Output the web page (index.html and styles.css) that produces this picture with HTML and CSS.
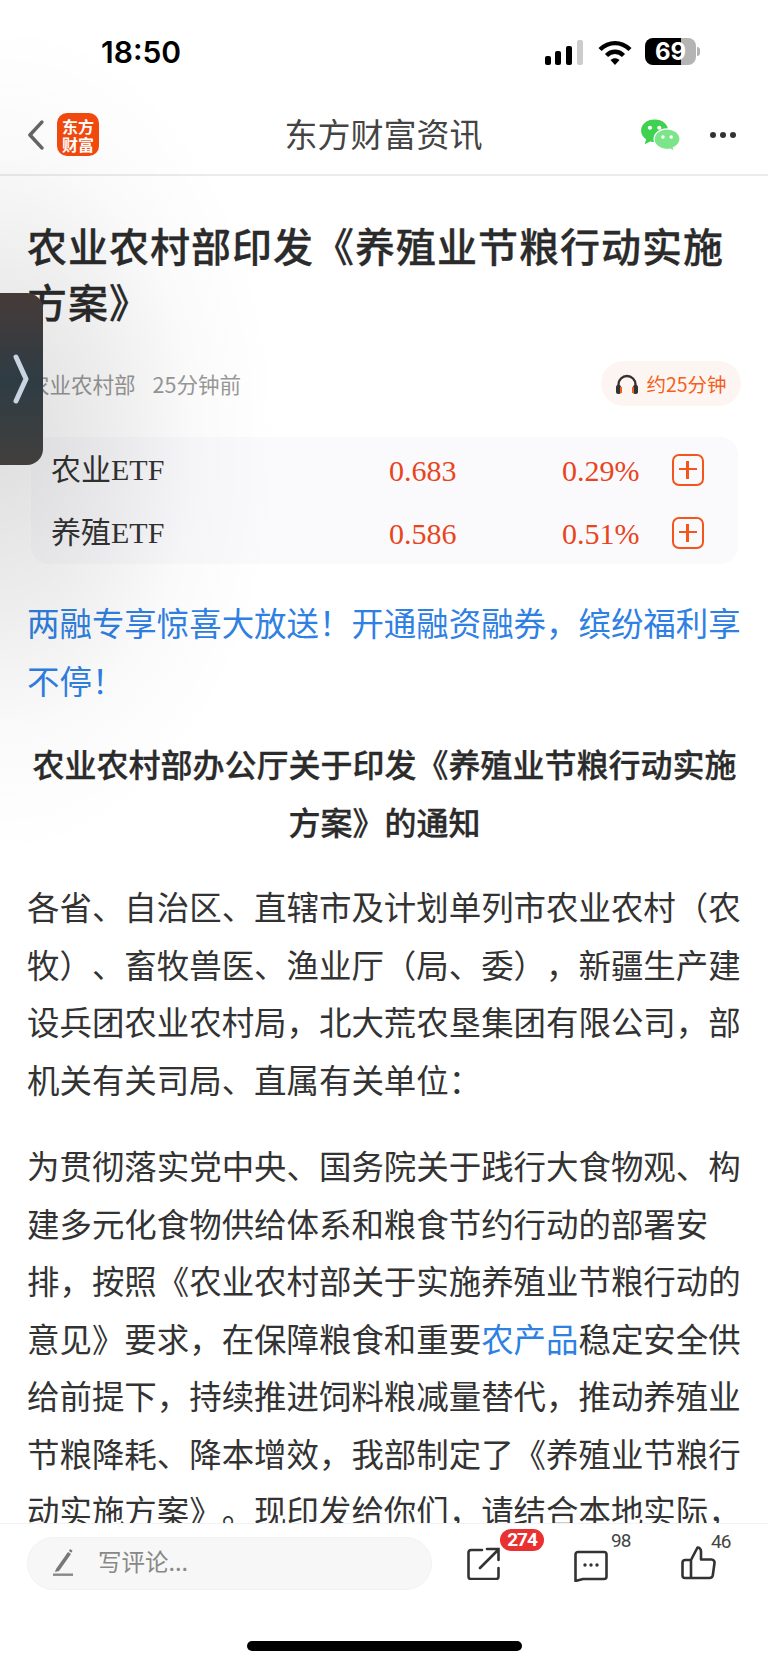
FILE: index.html
```html
<!DOCTYPE html>
<html lang="zh-CN">
<head>
<meta charset="utf-8">
<title>东方财富资讯</title>
<link rel="stylesheet" href="styles.css">
</head>
<body>
<div class="page">
  <header class="status">
    <span class="time">18:50</span>
    <div class="status-icons">
      <svg class="signal" width="39" height="25" viewBox="0 0 39 25"><rect x="0" y="16" width="6" height="9" rx="2" fill="#000"/><rect x="10" y="11" width="6" height="14" rx="2" fill="#000"/><rect x="21" y="6" width="6" height="19" rx="2" fill="#000"/><rect x="32" y="0" width="6" height="25" rx="2" fill="#ccc"/></svg>
      <svg class="wifi" width="34" height="25" viewBox="0 0 34 25"><path d="M2 9.500C11 1 23 1 32 9.500" fill="none" stroke="#000" stroke-width="4.400"/><path d="M8.500 15.500C13.500 10.500 20.500 10.500 25.500 15.500" fill="none" stroke="#000" stroke-width="4.400"/><path d="M12.500 20 17 25 21.500 20C18.500 17.500 15.500 17.500 12.500 20Z" fill="#000"/></svg>
      <div class="battery">
        <div class="battery-body"><span class="battery-level">69</span></div>
        <span class="battery-nub"></span>
      </div>
    </div>
  </header>

  <nav class="nav">
    <svg class="back" width="17" height="30" viewBox="0 0 17 30"><path d="M15 2 3 15 15 28" fill="none" stroke="#666" stroke-width="3.600" stroke-linecap="round" stroke-linejoin="round"/></svg>
    <div class="logo"><span>东方</span><span>财富</span></div>
    <div class="nav-title">东方财富资讯</div>
    <svg class="wechat" width="42" height="34" viewBox="0 0 40 32"><path d="M15 1C7.500 1 2 5.600 2 11.700c0 3.600 2 6.500 4.800 8.500L5.500 25l5.300-2.700c1.400.3 2.800.5 4.200.5 7.500 0 13-4.900 13-11.100S22.500 1 15 1Z" fill="#3fd150"/><path d="M27 10c-6.800 0-12.500 4.500-12.500 10S20.200 30 27 30c1.100 0 2.100-.1 3.100-.4L34 32l-1-3.800c3.200-1.700 6.500-4.500 6.500-8.200 0-5.500-5.700-10-12.500-10Z" fill="#7ce58a" stroke="#fff" stroke-width="1.200"/><circle cx="10.500" cy="9" r="2" fill="#fff"/><circle cx="19.500" cy="9" r="2" fill="#fff"/><circle cx="23" cy="18" r="1.700" fill="#fff"/><circle cx="31" cy="18" r="1.700" fill="#fff"/></svg>
    <div class="more"><i></i><i></i><i></i></div>
  </nav>

  <main class="content">
    <h1 class="title">农业农村部印发《养殖业节粮行动实施方案》</h1>
    <div class="meta">
      <div class="meta-text"><span>农业农村部</span><span>25分钟前</span></div>
      <div class="listen">
        <svg width="24" height="20" viewBox="0 0 24 20"><path d="M3.500 13V10.500a8.500 8.500 0 0 1 17 0V13" fill="none" stroke="#333" stroke-width="2.400"/><rect x="1" y="11" width="5" height="9" rx="2" fill="#333"/><rect x="18" y="11" width="5" height="9" rx="2" fill="#333"/><rect x="5" y="13" width="2" height="6" fill="#f4601c"/><rect x="17" y="13" width="2" height="6" fill="#f4601c"/></svg>
        <span>约25分钟</span>
      </div>
    </div>
    <section class="quotes">
      <div class="quote">
        <span class="q-name">农业ETF</span><span class="q-val">0.683</span><span class="q-val">0.29%</span>
        <span class="q-add"></span>
      </div>
      <div class="quote">
        <span class="q-name">养殖ETF</span><span class="q-val">0.586</span><span class="q-val">0.51%</span>
        <span class="q-add"></span>
      </div>
    </section>
    <p class="para promo">两融专享惊喜大放送！开通融资融券，缤纷福利享不停！</p>
    <p class="para heading">农业农村部办公厅关于印发《养殖业节粮行动实施方案》的通知</p>
    <p class="para">各省、自治区、直辖市及计划单列市农业农村（农牧）、畜牧兽医、渔业厅（局、委），新疆生产建设兵团农业农村局，北大荒农垦集团有限公司，部机关有关司局、直属有关单位：</p>
    <p class="para para-next">为贯彻落实党中央、国务院关于践行大食物观、构建多元化食物供给体系和粮食节约行动的部署安排，按照《农业农村部关于实施养殖业节粮行动的意见》要求，在保障粮食和重要<a class="link">农产品</a>稳定安全供给前提下，持续推进饲料粮减量替代，推动养殖业节粮降耗、降本增效，我部制定了《养殖业节粮行动实施方案》。现印发给你们，请结合本地实际，</p>
  </main>

  <footer class="bottom">
    <div class="actions">
      <div class="input">
        <svg class="pen" width="22" height="27" viewBox="0 0 22 27"><path d="M4 20 16 3l3 2-12 17-4 1Z" fill="#777"/><path d="M17 2l1-2 2.500 1.800-1.200 2Z" fill="#777"/><rect x="1" y="24.500" width="20" height="2.400" fill="#888"/></svg>
        <span class="placeholder">写评论...</span>
      </div>
      <div class="action action-share">
        <svg width="33" height="33" viewBox="0 0 33 33"><path d="M15 3H4a2.500 2.500 0 0 0-2.500 2.500v24A2.500 2.500 0 0 0 4 32h25a2.500 2.500 0 0 0 2.500-2.500V21M13 21 31 3M20 2h11.500v11" fill="none" stroke="#333" stroke-width="2.600" stroke-linecap="round"/></svg>
        <span class="badge">274</span>
      </div>
      <div class="action action-comment">
        <svg width="34" height="32" viewBox="0 0 34 32"><path d="M4 2h26a2.500 2.500 0 0 1 2.500 2.500v22A2.500 2.500 0 0 1 30 29H9l-7.500 2V4.500A2.500 2.500 0 0 1 4 2Z" fill="none" stroke="#333" stroke-width="2.600" stroke-linejoin="round"/><circle cx="11" cy="15" r="1.700" fill="#333"/><circle cx="17" cy="15" r="1.700" fill="#333"/><circle cx="23" cy="15" r="1.700" fill="#333"/></svg>
        <span class="count">98</span>
      </div>
      <div class="action action-like">
        <svg width="35" height="34" viewBox="0 0 35 34"><path d="M10 14h-6a2.500 2.500 0 0 0-2.500 2.500v13A2.500 2.500 0 0 0 4 32h24.500a3.500 3.500 0 0 0 3.300-2.800L33.500 17a3 3 0 0 0-3-3.500H20V5.500C20 3 18.500 1.500 16.500 1.500L10 14v18" fill="none" stroke="#333" stroke-width="2.600" stroke-linejoin="round"/></svg>
        <span class="count">46</span>
      </div>
    </div>
    <div class="home-bar"></div>
  </footer>

  <div class="edge-shade"></div>
  <div class="handle">
    <svg width="16" height="50" viewBox="0 0 16 50"><path d="M3 3 13 25 3 47" fill="none" stroke="#c9d3e2" stroke-width="5" stroke-linecap="round" stroke-linejoin="round"/></svg>
  </div>
</div>
</body>
</html>
```

FILE: styles.css
```css
* { box-sizing: border-box; }
html, body { margin: 0; padding: 0; background: #fff; }
body {
  font-family: "Noto Sans CJK SC", "Noto Sans", sans-serif;
  color: #333;
  text-spacing-trim: space-all;
  font-kerning: none;
}

.page {
  position: relative;
  width: 768px;
  height: 1665px;
  overflow: hidden;
  display: flex;
  flex-direction: column;
  background: #fff;
}

.status {
  height: 105px;
  flex: none;
  display: flex;
  justify-content: space-between;
  padding: 38px 68px 0 101px;
}
.time {
  font: 600 30px/28px Inter, sans-serif;
  color: #000;
}
.status-icons { display: flex; gap: 14px; height: 27px; align-items: center; }
.signal { margin-top: 2px; }
.wifi { margin-top: 2px; }
.battery { display: flex; align-items: center; margin-left: -1px; }
.battery-body {
  width: 51px;
  height: 27px;
  border-radius: 8px;
  background: linear-gradient(90deg, #000 70%, #b4b4b4 70%);
  display: flex;
  align-items: center;
  justify-content: center;
}
.battery-level { font: 700 24px/27px Inter, sans-serif; color: #fff; }
.battery-nub { width: 3px; height: 9px; margin-left: 1px; background: #b4b4b4; border-radius: 0 3px 3px 0; }

.nav {
  height: 71px;
  flex: none;
  display: flex;
  align-items: flex-start;
  border-bottom: 2px solid #ebebeb;
  padding: 6px 32px 0 27px;
}
.back { margin: 9px 13px 0 0; }
.logo {
  width: 43px;
  height: 43px;
  margin-top: 2px;
  border-radius: 10px;
  background: #f44a0d;
  display: flex;
  flex-direction: column;
  align-items: center;
  justify-content: center;
  font-weight: 700;
  font-size: 16px;
  line-height: 18px;
  color: #fff;
}
.nav-title {
  width: 198px;
  margin-left: 185px;
  font-size: 33px;
  line-height: 44px;
  color: #444;
  white-space: nowrap;
}
.wechat { margin: 7px 0 0 157px; }
.more { display: flex; gap: 4px; margin: 21px 0 0 29px; }
.more i { width: 6px; height: 6px; border-radius: 50%; background: #333; }

.content {
  flex: 1;
  min-height: 0;
  overflow: hidden;
  padding: 41px 26px 0 27px;
}
.title {
  margin: 0;
  font-size: 40px;
  letter-spacing: 1px;
  line-height: 56px;
  font-weight: 500;
  -webkit-text-stroke: 0.3px #2b2b2b;
  color: #2b2b2b;
}
.meta {
  display: flex;
  justify-content: space-between;
  align-items: center;
  margin: 32px 2px 0 0;
}
.meta-text { display: flex; gap: 17px; font-size: 21.500px; line-height: 45px; color: #999; padding-left: 1px; }
.listen {
  width: 140px;
  height: 45px;
  margin-right: -1px;
  border-radius: 23px;
  background: #fdf5f2;
  display: flex;
  align-items: center;
  justify-content: center;
  gap: 7px;
  font-size: 19.500px;
  color: #f4601c;
  white-space: nowrap;
}

.quotes {
  margin: 31px 4px 0 4px;
  height: 127px;
  border-radius: 18px;
  background: #fafafc;
  padding: 1px 33px 0 20px;
}
.quote {
  height: 63px;
  display: grid;
  grid-template-columns: 338px 173px 110px 32px;
  align-items: center;
  font-family: "Liberation Serif", "Noto Sans CJK SC", serif;
  font-size: 30px;
}
.q-name { color: #333; padding-bottom: 5px; }
.q-val { color: #e8451f; padding-top: 3px; }
.q-add {
  position: relative;
  width: 32px;
  height: 32px;
  border: 2.500px solid #f4551c;
  border-radius: 7px;
}
.q-add::before, .q-add::after {
  content: "";
  position: absolute;
  background: #f4551c;
}
.q-add::before { left: 5px; right: 5px; top: 12px; height: 2.500px; }
.q-add::after { top: 5px; bottom: 5px; left: 12px; width: 2.500px; }

.para {
  margin: 27px 0 0;
  font-size: 32.450px;
  line-height: 57.500px;
  color: #333;
}
.para-next { margin-top: 29px; }
.promo { margin-top: 29px; color: #2f80e3; }
.heading {
  font-size: 32px;
  font-weight: 500;
  -webkit-text-stroke: 0.3px #2b2b2b;
  text-align: center;
  color: #2b2b2b;
}
.link { color: #2f80e3; }

.bottom {
  flex: none;
  height: 142px;
  background: #fff;
  border-top: 1px solid #f2f2f2;
  position: relative;
  padding: 13px 0 0 27px;
}
.actions { display: flex; align-items: flex-start; }
.input {
  width: 405px;
  height: 53px;
  border-radius: 27px;
  background: #f7f7f7;
  border: 1px solid #f2f2f2;
  display: flex;
  align-items: center;
  gap: 24px;
  padding-left: 24px;
  font-size: 23.500px;
  color: #888;
  flex: none;
}
.pen { margin-bottom: 3px; }
.placeholder { padding-bottom: 5px; }
.action { position: relative; flex: none; }
.action-share { margin: 10px 0 0 35px; }
.action-comment { margin: 13px 0 0 74px; }
.action-like { margin: 9px 0 0 73px; }
.badge {
  position: absolute;
  left: 33px;
  top: -18px;
  width: 44px;
  height: 22px;
  border-radius: 11px;
  background: #ea3030;
  color: #fff;
  font: 700 19px/22px Roboto, sans-serif;
  text-align: center;
  letter-spacing: -1px;
}
.count {
  position: absolute;
  top: -19px;
  left: 37px;
  font: 400 19px/20px Roboto, sans-serif;
  letter-spacing: -1px;
  color: #444;
}
.action-like .count { top: -14px; left: 30px; }
.home-bar {
  position: absolute;
  left: 247px;
  top: 117px;
  width: 275px;
  height: 10px;
  border-radius: 5px;
  background: #000;
}

.edge-shade {
  position: absolute;
  left: 0;
  top: 0;
  width: 340px;
  height: 900px;
  pointer-events: none;
  background: radial-gradient(ellipse 280px 420px at 0 440px, rgba(0,0,0,.13), rgba(0,0,0,.07) 40%, rgba(0,0,0,.02) 70%, rgba(0,0,0,0) 100%);
}
.handle {
  position: absolute;
  left: 0;
  top: 293px;
  width: 43px;
  height: 172px;
  border-radius: 0 16px 16px 0;
  background: linear-gradient(180deg, #463a38 0%, #2f3c44 50%, #413f3d 100%);
  display: flex;
  align-items: center;
  padding-left: 13px;
}
```
